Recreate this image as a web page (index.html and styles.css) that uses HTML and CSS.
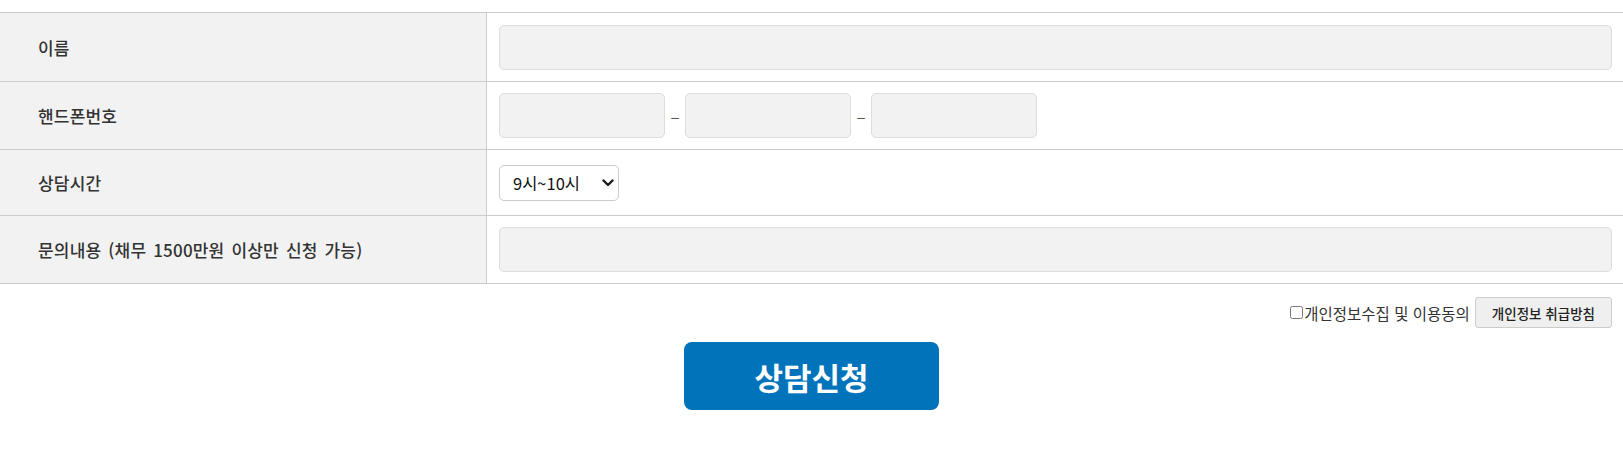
FILE: index.html
```html
<!DOCTYPE html>
<html lang="ko">
<head>
<meta charset="utf-8">
<title>상담신청</title>
<link rel="stylesheet" href="styles.css">
</head>
<body>
<div class="wrap">
  <div class="form-table">
    <div class="row">
      <div class="label">이름</div>
      <div class="field field-first"><input class="text-input full" type="text"></div>
    </div>
    <div class="row">
      <div class="label">핸드폰번호</div>
      <div class="field phone">
        <input class="text-input short" type="text">
        <span class="dash">–</span>
        <input class="text-input short" type="text">
        <span class="dash">–</span>
        <input class="text-input short" type="text">
      </div>
    </div>
    <div class="row">
      <div class="label">상담시간</div>
      <div class="field field-select">
        <span class="select-wrap">
          <select class="time-select">
            <option>9시~10시</option>
            <option>10시~11시</option>
            <option>11시~12시</option>
          </select>
          <svg class="select-arrow" width="12" height="8" viewBox="0 0 12 8" aria-hidden="true">
            <path d="M1.5 1.5 L6 6 L10.5 1.5" fill="none" stroke="#1a1a1a" stroke-width="2.4" stroke-linecap="round" stroke-linejoin="round"/>
          </svg>
        </span>
      </div>
    </div>
    <div class="row">
      <div class="label">문의내용 (채무 1500만원 이상만 신청 가능)</div>
      <div class="field"><input class="text-input full" type="text"></div>
    </div>
  </div>
  <div class="agree">
    <label class="agree-label"><input class="agree-check" type="checkbox">개인정보수집 및 이용동의</label>
    <button class="policy-btn" type="button">개인정보 취급방침</button>
  </div>
  <div class="submit-wrap">
    <button class="submit-btn" type="button">상담신청</button>
  </div>
</div>
</body>
</html>
```

FILE: styles.css
```css
html, body {
  margin: 0;
  padding: 0;
  background: #fff;
}
body {
  font-family: "Noto Sans CJK KR", "Noto Sans", sans-serif;
  color: #333;
}
.wrap {
  padding-top: 12px;
}
.form-table {
  border-top: 1px solid #cccccc;
}
.row {
  display: grid;
  grid-template-columns: 487px 1fr;
  border-bottom: 1px solid #cccccc;
}
.label {
  box-sizing: border-box;
  background: #f2f2f2;
  border-right: 1px solid #cccccc;
  padding-left: 38px;
  display: flex;
  align-items: center;
  font-size: 17px;
  font-weight: 500;
  word-spacing: 2px;
  letter-spacing: 0.2px;
  color: #333;
}
.field {
  padding: 11px 11px 11px 12px;
  display: flex;
  align-items: center;
}
.field-first {
  padding-top: 12px;
}
.field-select {
  padding-top: 15px;
  padding-bottom: 14px;
}
.text-input {
  box-sizing: border-box;
  height: 45px;
  background: #f2f2f2;
  border: 1px solid #dddddd;
  border-radius: 5px;
  margin: 0;
  padding: 0 10px;
  font-family: inherit;
  font-size: 15px;
}
.full {
  width: 100%;
}
.short {
  width: 166px;
}
.dash {
  width: 20px;
  text-align: center;
  font-size: 17px;
  color: #555;
}
.select-wrap {
  position: relative;
  display: inline-flex;
}
.time-select {
  box-sizing: border-box;
  width: 120px;
  height: 36px;
  margin: 0;
  padding: 0 24px 0 13px;
  border: 1px solid #cccccc;
  border-radius: 5px;
  background: #fff;
  -webkit-appearance: none;
  appearance: none;
  font-family: inherit;
  font-size: 16.5px;
  color: #111;
}
.select-arrow {
  position: absolute;
  right: 5px;
  top: 14px;
  pointer-events: none;
}
.agree {
  display: flex;
  justify-content: flex-end;
  align-items: center;
  margin-top: 13px;
  padding-right: 11px;
  gap: 5px;
}
.agree-label {
  display: flex;
  align-items: center;
  font-size: 15.5px;
  color: #333;
}
.agree-check {
  width: 13px;
  height: 13px;
  margin: 0 1px 0 0;
}
.policy-btn {
  box-sizing: border-box;
  height: 31px;
  padding: 0 16px;
  margin: 0;
  border: 1px solid #cccccc;
  border-radius: 3px;
  background: #efefef;
  font-family: inherit;
  font-size: 13.5px;
  font-weight: 500;
  color: #222;
}
.submit-wrap {
  display: flex;
  justify-content: center;
  margin-top: 14px;
}
.submit-btn {
  width: 255px;
  height: 68px;
  margin: 0;
  border: 0;
  border-radius: 8px;
  background: #0073bb;
  color: #fff;
  font-family: inherit;
  font-size: 31px;
  font-weight: 700;
}
```
